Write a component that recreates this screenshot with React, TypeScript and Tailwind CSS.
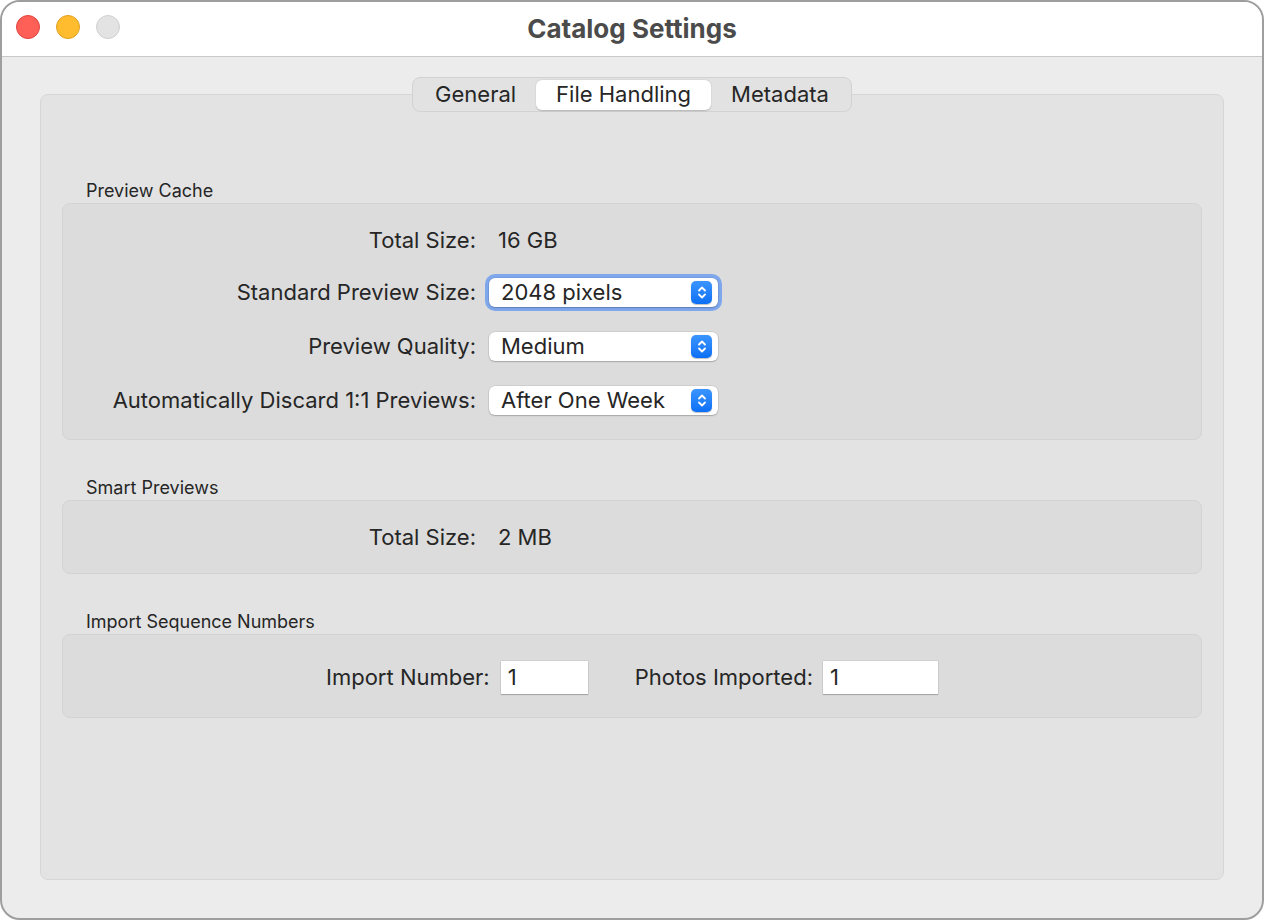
import React from "react";

const FONT = { fontFamily: "Inter, 'Noto Sans', 'Liberation Sans', sans-serif" };

function Stepper() {
  return (
    <span className="flex h-[23px] w-[21px] items-center justify-center rounded-[5px] bg-gradient-to-b from-[#3a95ff] to-[#0a6ff5] shadow-[0_0.5px_1px_rgba(0,0,0,0.25)]">
      <svg width="10" height="15" viewBox="0 0 10 15" fill="none">
        <path d="M2 5.5 L5 2.5 L8 5.5" stroke="white" strokeWidth="1.8" strokeLinecap="round" strokeLinejoin="round" />
        <path d="M2 9.5 L5 12.5 L8 9.5" stroke="white" strokeWidth="1.8" strokeLinecap="round" strokeLinejoin="round" />
      </svg>
    </span>
  );
}

function Select({ value, focused }: { value: string; focused?: boolean }) {
  const box = (
    <div className="flex h-[29px] w-[229px] items-center justify-between rounded-[6px] bg-white pl-[12px] pr-[6px] shadow-[0_0_0_0.5px_rgba(0,0,0,0.12),0_1px_1.5px_rgba(0,0,0,0.2)]">
      <span className="text-[22px] leading-none text-[#262626]">{value}</span>
      <Stepper />
    </div>
  );
  if (!focused) return box;
  return <div className="-m-[4px] rounded-[10px] bg-[#7fa7ec] p-[4px]">{box}</div>;
}

function Row({ label, children, h }: { label: string; children: React.ReactNode; h: string }) {
  return (
    <div className={`flex items-center ${h}`}>
      <div className="w-[413px] shrink-0 text-right text-[22px] text-[#262626]">{label}</div>
      {children}
    </div>
  );
}

function Group({ title, children, cls }: { title: string; children: React.ReactNode; cls: string }) {
  return (
    <div>
      <div className="h-[20px] pl-[45px] text-[18px] leading-[20px] text-[#262626]">{title}</div>
      <div className={`mx-[21px] mt-[2px] rounded-[8px] border border-[#d3d3d3] bg-[#dcdcdc] ${cls}`}>{children}</div>
    </div>
  );
}

export default function App() {
  const tabs = ["General", "File Handling", "Metadata"];
  return (
    <div className="h-[920px] w-[1264px] bg-white" style={FONT}>
      <div className="flex h-[920px] w-[1264px] flex-col overflow-hidden rounded-[20px] border-2 border-[#9e9e9e] bg-[#ececec]">
        {/* title bar */}
        <div className="relative flex h-[55px] shrink-0 items-center justify-center border-b border-[#c9c9c9] bg-white">
          <div className="absolute left-[14px] top-[13px] flex gap-[16px]">
            <span className="h-[24px] w-[24px] rounded-full border border-[#e0443e] bg-[#fe5f57]" />
            <span className="h-[24px] w-[24px] rounded-full border border-[#dea123] bg-[#febc2e]" />
            <span className="h-[24px] w-[24px] rounded-full border border-[#cfcfcf] bg-[#e3e3e3]" />
          </div>
          <h1 className="-mt-[2px] text-[26px] font-bold text-[#4b4b4b]">Catalog Settings</h1>
        </div>

        {/* body */}
        <div className="flex flex-1 flex-col px-[38px] pt-[20px]">
          <div className="relative z-10 flex justify-center">
            <div className="flex h-[35px] items-center rounded-[8px] border border-[#d2d2d2] bg-[#e2e2e2] px-[2px]">
              {tabs.map((t) => (
                <div
                  key={t}
                  className={`flex h-[30px] items-center px-[20px] text-[22px] text-[#262626] ${
                    t === "File Handling" ? "rounded-[6px] bg-white shadow-[0_0.5px_1.5px_rgba(0,0,0,0.2)]" : ""
                  }`}
                >
                  {t}
                </div>
              ))}
            </div>
          </div>

          <div className="-mt-[18px] mb-[38px] flex-1 rounded-[8px] border border-[#d6d6d6] bg-[#e3e3e3] pt-[86px]">
            <Group title="Preview Cache" cls="pt-[11px] pb-[12px]">
              <Row label="Total Size:" h="h-[50px]">
                <span className="ml-[22px] text-[22px] text-[#262626]">16 GB</span>
              </Row>
              <Row label="Standard Preview Size:" h="h-[54px]">
                <div className="ml-[13px]"><Select value="2048 pixels" focused /></div>
              </Row>
              <Row label="Preview Quality:" h="h-[54px]">
                <div className="ml-[13px]"><Select value="Medium" /></div>
              </Row>
              <Row label="Automatically Discard 1:1 Previews:" h="h-[54px]">
                <div className="ml-[13px]"><Select value="After One Week" /></div>
              </Row>
            </Group>

            <div className="h-[38px]" />
            <Group title="Smart Previews" cls="pt-[11px] pb-[11px]">
              <Row label="Total Size:" h="h-[50px]">
                <span className="ml-[22px] text-[22px] text-[#262626]">2 MB</span>
              </Row>
            </Group>

            <div className="h-[38px]" />
            <Group title="Import Sequence Numbers" cls="pt-[12px] pb-[10px]">
              <div className="flex h-[60px] items-center justify-center text-[22px] text-[#262626]">
                <span>Import Number:</span>
                <div className="ml-[11px] flex h-[33px] w-[87px] items-center bg-white pl-[7px] shadow-[0_0_0_0.5px_rgba(0,0,0,0.1),0_1px_1px_rgba(0,0,0,0.2)]">1</div>
                <span className="ml-[47px]">Photos Imported:</span>
                <div className="ml-[10px] flex h-[33px] w-[115px] items-center bg-white pl-[7px] shadow-[0_0_0_0.5px_rgba(0,0,0,0.1),0_1px_1px_rgba(0,0,0,0.2)]">1</div>
              </div>
            </Group>
          </div>
        </div>
      </div>
    </div>
  );
}
